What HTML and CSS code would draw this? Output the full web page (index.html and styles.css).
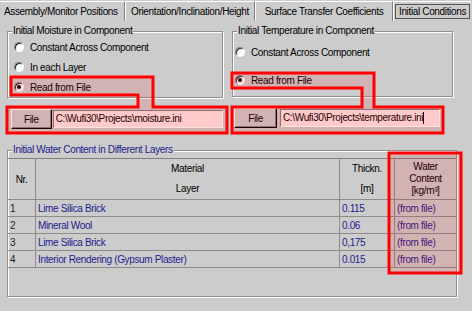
FILE: index.html
```html
<!DOCTYPE html>
<html lang="en">
<head>
  <meta charset="UTF-8" />
  <title>Initial Conditions</title>
  <link rel="stylesheet" href="styles.css">
</head>
<body>

  <div class="tabs">
    <div class="tab tab-assembly">Assembly/Monitor Positions</div>
    <div class="tab tab-orient">Orientation/Inclination/Height</div>
    <div class="tab tab-surface">Surface Transfer Coefficients</div>
    <div class="tab tab-initial active"><span class="focus">Initial Conditions</span></div>
  </div>

  <div class="panel">
    <div class="groups">
      <div class="col col-left">
        <fieldset class="group group-moisture">
          <legend>Initial Moisture in Component</legend>
          <div class="opt"><span class="radio"></span>Constant Across Component</div>
          <div class="opt"><span class="radio"></span>In each Layer</div>
          <div class="opt"><span class="radio checked"></span>Read from File</div>
        </fieldset>
        <div class="filerow">
          <button class="btn btn-left">File</button>
          <div class="path path-left">C:\Wufi30\Projects\moisture.ini</div>
        </div>
      </div>

      <div class="col col-right">
        <fieldset class="group group-temp">
          <legend>Initial Temperature in Component</legend>
          <div class="opt opt-tall"><span class="radio"></span>Constant Across Component</div>
          <div class="opt opt-tall"><span class="radio checked"></span>Read from File</div>
        </fieldset>
        <div class="filerow">
          <button class="btn btn-right">File</button>
          <div class="path path-right">C:\Wufi30\Projects\temperature.ini<span class="caret"></span></div>
        </div>
      </div>
    </div>

    <fieldset class="group group-layers">
      <legend>Initial Water Content in Different Layers</legend>
      <div class="grid-frame">
        <table class="layers">
          <thead>
            <tr>
              <th class="c-nr">Nr.</th>
              <th class="c-mat"><div>Material</div><div>Layer</div></th>
              <th class="c-thk"><div>Thickn.</div><div>[m]</div></th>
              <th class="c-wc"><div class="wc-head">Water<br>Content<br>[kg/m³]</div></th>
            </tr>
          </thead>
          <tbody id="layerRows"></tbody>
        </table>
      </div>
    </fieldset>
  </div>

  <svg class="marks" width="472" height="311" viewBox="0 0 472 311">
    <path d="M11 77 H153 V107 H227 V133 H7 V107 H138 V95 H11 Z" />
    <path d="M232 73 H374 V107 H443 V133 H232 V107 H362 V88 H232 Z" />
    <rect x="389" y="153" width="72" height="120" />
  </svg>

  <script>
    const layers = [
      { nr: 1, name: "Lime Silica Brick", thick: "0.115" },
      { nr: 2, name: "Mineral Wool", thick: "0.06" },
      { nr: 3, name: "Lime Silica Brick", thick: "0,175" },
      { nr: 4, name: "Interior Rendering (Gypsum Plaster)", thick: "0.015" }
    ];

    const body = document.getElementById("layerRows");
    layers.forEach(l => {
      const row = document.createElement("tr");
      row.innerHTML = `
        <td class="c-nr">${l.nr}</td>
        <td class="c-mat">${l.name}</td>
        <td class="c-thk">${l.thick}</td>
        <td class="c-wc">(from file)</td>
      `;
      body.appendChild(row);
    });
  </script>

</body>
</html>
```

FILE: styles.css
```css
body {
  margin: 0;
  width: 472px;
  height: 311px;
  background-color: #cccccc;
  font-family: 'Liberation Sans', Arial, sans-serif;
  font-size: 10px;
  letter-spacing: -0.35px;
  color: #000;
  position: relative;
  overflow: hidden;
}

/* tab strip */
.tabs {
  display: flex;
  height: 21px;
  padding-top: 1px;
  box-sizing: border-box;
}

.tab {
  height: 20px;
  line-height: 19px;
  box-sizing: border-box;
  border-top: 1px solid #fff;
  border-left: 1px solid #fff;
  border-right: 1px solid #808080;
  white-space: nowrap;
  text-align: center;
}

.tab-assembly { width: 125px; border-left: none; text-align: left; padding-left: 4px; }
.tab-orient { width: 130px; }
.tab-surface { width: 138px; }
.tab-initial { width: 78px; border-right: none; }

.focus {
  display: inline-block;
  height: 15px;
  line-height: 14px;
  margin-top: 1px;
  padding: 0 3px;
  box-sizing: border-box;
  border: 1px solid #555;
}

/* page */
.panel {
  padding: 4px 0 0 7px;
}

.groups {
  display: flex;
  gap: 9px;
}

.col-left { width: 216px; }
.col-right { width: 221px; }

.group {
  margin: 0;
  padding: 0;
  border: 1px solid #909090;
  box-shadow: inset 1px 1px 0 #fff, 1px 1px 0 #fff;
}

.group legend {
  padding: 0 1px;
  margin-left: 4px;
  line-height: 12px;
  background-color: #cccccc;
}

.opt {
  display: flex;
  align-items: center;
  height: 20px;
  padding-left: 6px;
  white-space: nowrap;
}

.group-temp .opt { padding-left: 2px; }
.opt-tall { height: 28px; }
.group-temp { padding: 1px 0 2px; }

.radio {
  width: 10px;
  height: 10px;
  box-sizing: border-box;
  border-radius: 50%;
  border: 1px solid;
  border-color: #808080 #fff #fff #808080;
  background: #fff;
  box-shadow: inset 1px 1px 0 #222;
  margin-right: 6px;
  position: relative;
}

.radio.checked::after {
  content: "";
  position: absolute;
  left: 2px;
  top: 2px;
  width: 4px;
  height: 4px;
  border-radius: 50%;
  background: #000;
}

/* file rows */
.filerow {
  display: flex;
  align-items: center;
  margin-top: 11px;
  height: 20px;
}

.btn {
  height: 20px;
  padding: 0;
  font: inherit;
  letter-spacing: inherit;
  color: #000;
  background: #cccccc;
  border: 1px solid;
  border-color: #fff #000 #000 #fff;
  box-shadow: inset -1px -1px 0 #808080;
}

.btn-left { width: 41px; margin-left: 4px; margin-right: 1px; }
.btn-right { width: 43px; margin-left: 2px; margin-right: 3px; }

.path {
  height: 18px;
  line-height: 16px;
  box-sizing: border-box;
  padding-left: 2px;
  background: #ffe6e6;
  border: 1px solid;
  border-color: #808080 #fff #fff #808080;
  white-space: nowrap;
  overflow: hidden;
}

.path-left { width: 172px; }
.path-right { width: 160px; }

.caret {
  display: inline-block;
  width: 1px;
  height: 12px;
  background: #000;
  vertical-align: middle;
}

/* layers table */
.group-layers {
  width: 449px;
  margin-top: 15px;
  height: 153px;
  box-sizing: border-box;
}

.group-layers legend {
  color: #1c1c8c;
}

.grid-frame {
  margin-top: 2px;
  height: 143px;
  border-top: 1px solid #808080;
}

.layers {
  border-collapse: collapse;
  table-layout: fixed;
  width: 447px;
}

.layers th,
.layers td {
  border: 1px solid #8c8c8c;
  padding: 0 2px;
  font-weight: normal;
  white-space: nowrap;
}

.layers tr > :first-child { border-left: none; }
.layers tr > :last-child { border-right: none; }
.layers thead th { border-top: none; }

.layers th { height: 39px; text-align: center; }
.layers th div { line-height: 20px; }
.layers th .wc-head { line-height: 12px; }

.layers td {
  height: 16px;
  color: #1c1c8c;
  text-align: left;
}

.layers td.c-nr { color: #222; }

.c-nr { width: 23px; }
.c-mat { width: 299px; }
.c-thk { width: 50px; }
.c-wc { width: 57px; }

/* red highlight marks */
.marks {
  position: absolute;
  left: 0;
  top: 0;
  pointer-events: none;
}

.marks path,
.marks rect {
  fill: rgba(255, 0, 0, 0.12);
  stroke: #ff0000;
  stroke-width: 3;
}
```
